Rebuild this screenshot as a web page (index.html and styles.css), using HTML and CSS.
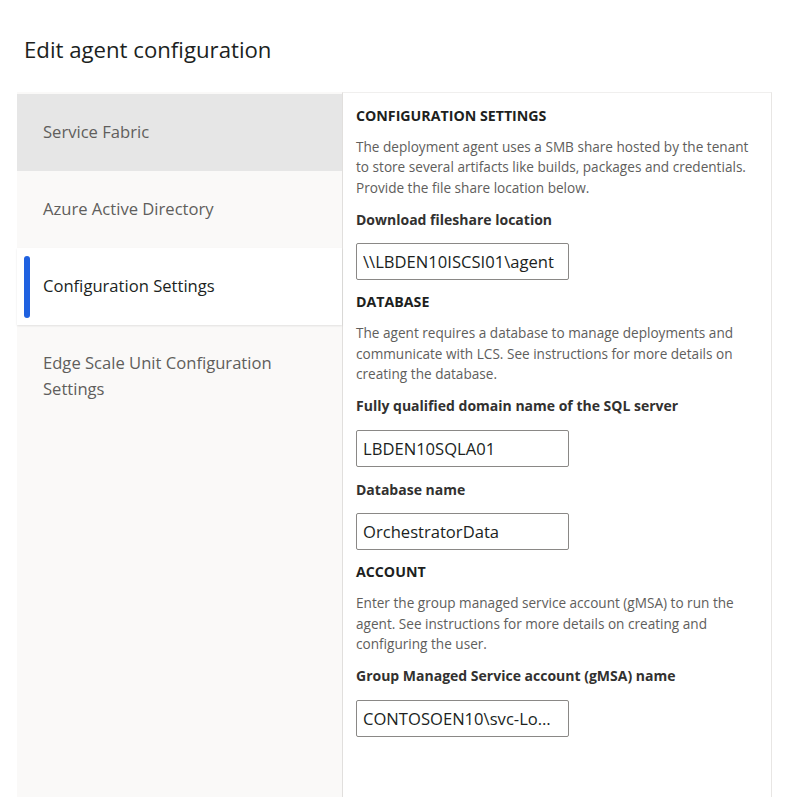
FILE: index.html
```html
<!DOCTYPE html>
<html lang="en">
<head>
<meta charset="utf-8">
<title>Edit agent configuration</title>
<link rel="stylesheet" href="styles.css">
</head>
<body>
<h1 class="title">Edit agent configuration</h1>
<div class="layout">
  <nav class="nav">
    <div class="nav-item hovered">Service Fabric</div>
    <div class="nav-item">Azure Active Directory</div>
    <div class="nav-item active">Configuration Settings</div>
    <div class="nav-item">Edge Scale Unit Configuration Settings</div>
  </nav>
  <section class="panel">
    <h2 class="section-title">CONFIGURATION SETTINGS</h2>
    <p class="desc">The deployment agent uses a SMB share hosted by the tenant<br>to store several artifacts like builds, packages and credentials.<br>Provide the file share location below.</p>
    <label class="field-label" for="f1">Download fileshare location</label>
    <input class="field" id="f1" type="text" value="\\LBDEN10ISCSI01\agent">

    <h2 class="section-title">DATABASE</h2>
    <p class="desc">The agent requires a database to manage deployments and<br>communicate with LCS. See instructions for more details on<br>creating the database.</p>
    <label class="field-label" for="f2">Fully qualified domain name of the SQL server</label>
    <input class="field" id="f2" type="text" value="LBDEN10SQLA01">
    <label class="field-label" for="f3">Database name</label>
    <input class="field" id="f3" type="text" value="OrchestratorData">

    <h2 class="section-title">ACCOUNT</h2>
    <p class="desc">Enter the group managed service account (gMSA) to run the<br>agent. See instructions for more details on creating and<br>configuring the user.</p>
    <label class="field-label" for="f4">Group Managed Service account (gMSA) name</label>
    <input class="field field-long" id="f4" type="text" value="CONTOSOEN10\svc-LocalAgent">
  </section>
</div>
</body>
</html>
```
FILE: styles.css
```css
* { box-sizing: border-box; }
html, body { margin: 0; padding: 0; background: #ffffff; }
body {
  font-family: "Open Sans", "Noto Sans", "Liberation Sans", sans-serif;
  color: #201f1e;
  overflow: hidden;
}
.title {
  margin: 0;
  padding: 36px 24px 0;
  height: 92px;
  font-size: 22.2px;
  font-weight: 500;
  line-height: 28px;
  color: #201f1e;
}
.layout {
  display: flex;
  margin-left: 17px;
  width: 755px;
  height: 720px;
}
.nav {
  width: 325px;
  flex: none;
  background: #faf9f8;
  padding-top: 2px;
}
.nav-item {
  position: relative;
  min-height: 77px;
  padding: 25px 40px 26px 26px;
  font-size: 16.6px;
  line-height: 26px;
  color: #605e5c;
}
.nav-item.hovered { background: #e6e6e6; }
.nav-item.active {
  background: #ffffff;
  color: #201f1e;
  box-shadow: 0 1px 2px rgba(0, 0, 0, 0.1);
  z-index: 1;
}
.nav-item.active::before {
  content: "";
  position: absolute;
  left: 7px;
  top: 8px;
  bottom: 7px;
  width: 6px;
  border-radius: 3px;
  background: #1f61e0;
}
.panel {
  flex: 1;
  display: flex;
  flex-direction: column;
  align-items: flex-start;
  background: #ffffff;
  border-top: 1px solid #f0efee;
  border-left: 1px solid #e1dfdd;
  border-right: 1px solid #e8e6e4;
  padding: 13px 0 0 13px;
}
.section-title {
  margin: 0 0 11px;
  font-size: 14.2px;
  font-weight: 700;
  line-height: 20px;
  color: #201f1e;
}
.desc {
  margin: 0 0 12px;
  font-size: 13.6px;
  line-height: 20.3px;
  color: #605e5c;
  white-space: nowrap;
}
.field-label {
  display: block;
  margin: 0 0 13.5px;
  font-size: 14px;
  font-weight: 700;
  line-height: 20px;
  color: #323130;
}
.field {
  display: block;
  width: 213px;
  height: 37px;
  margin: 0 0 12px;
  padding: 0 4px 0 6px;
  border: 1px solid #8a8886;
  border-radius: 2px;
  background: #ffffff;
  font-family: inherit;
  font-size: 16.6px;
  color: #201f1e;
  text-overflow: ellipsis;
  outline: none;
}
.field-long { padding-right: 14px; }
.field + .field-label { margin-top: 1px; }
```
